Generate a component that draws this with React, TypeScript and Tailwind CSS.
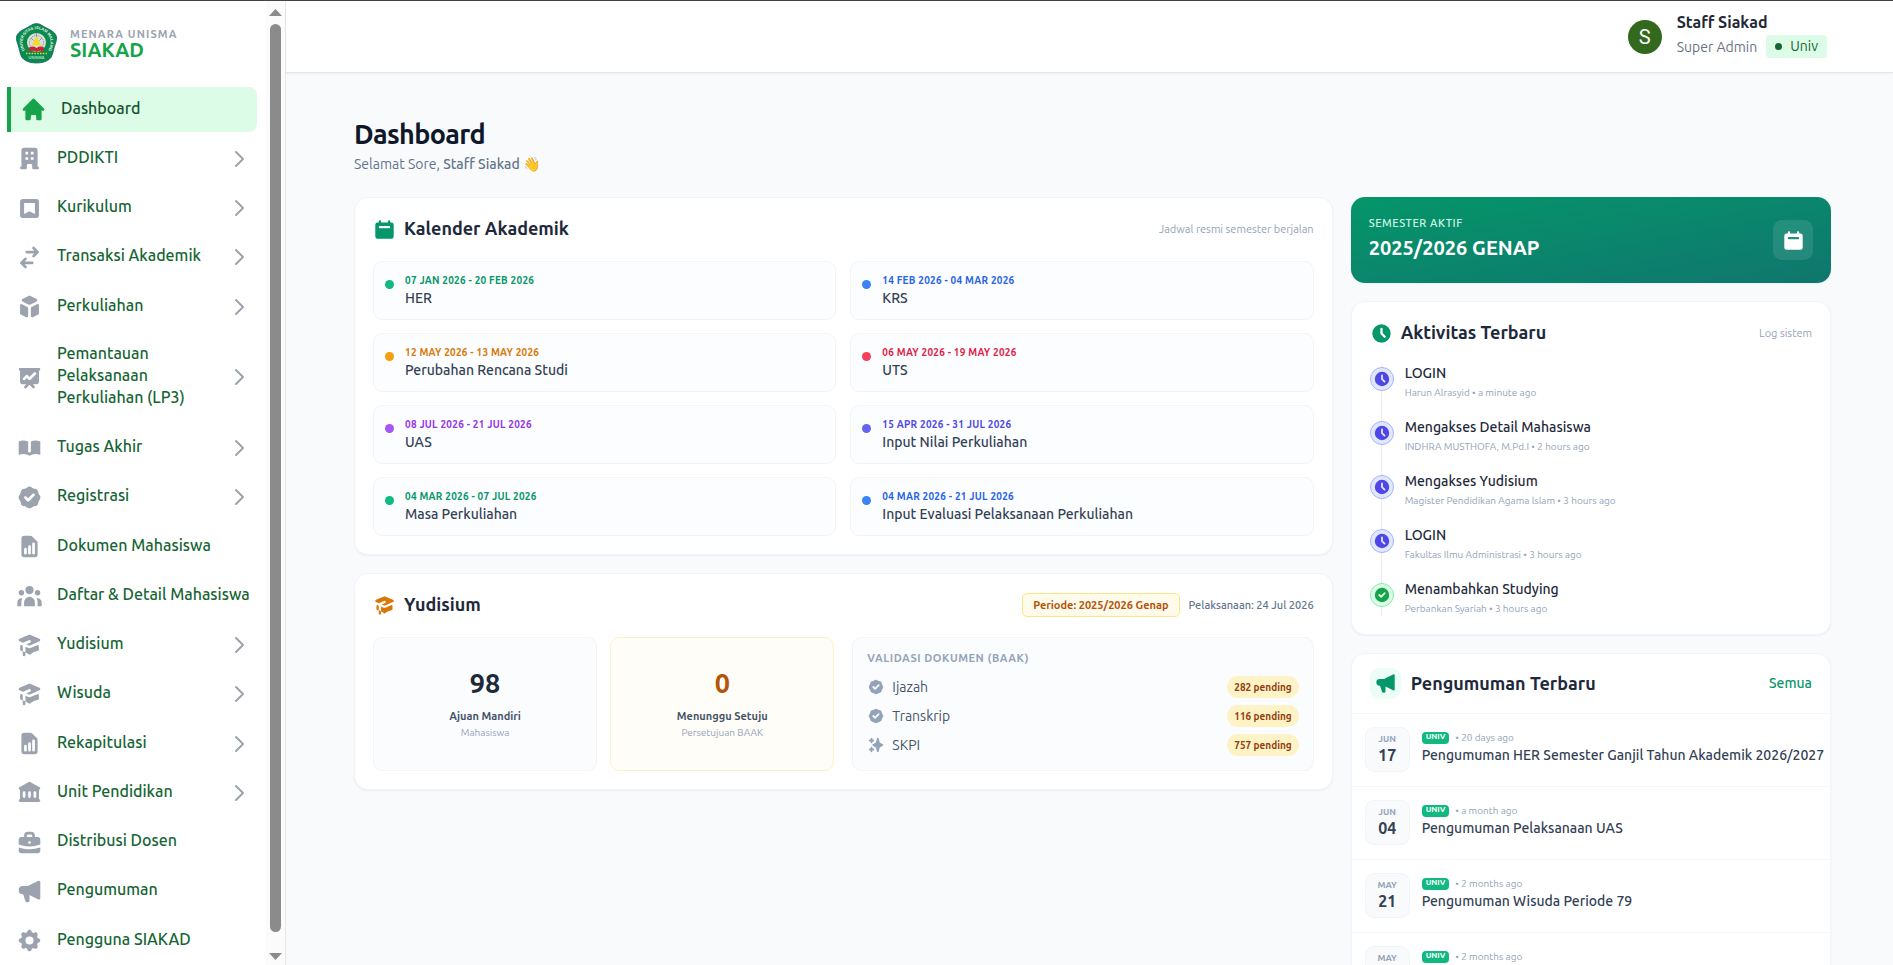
import type { ReactNode } from "react";
import type { IconType } from "react-icons";
import {
  HiAcademicCap,
  HiBadgeCheck,
  HiBookOpen,
  HiBookmarkAlt,
  HiBriefcase,
  HiCalendar,
  HiCheckCircle,
  HiClock,
  HiCog,
  HiCube,
  HiDocumentReport,
  HiHome,
  HiLibrary,
  HiOfficeBuilding,
  HiOutlineChevronRight,
  HiPresentationChartLine,
  HiSparkles,
  HiSpeakerphone,
  HiSwitchHorizontal,
  HiUserGroup,
} from "react-icons/hi";

type NavItem = { label: string; icon: IconType; expandable?: boolean; active?: boolean };

const navItems: NavItem[] = [
  { label: "Dashboard", icon: HiHome, active: true },
  { label: "PDDIKTI", icon: HiOfficeBuilding, expandable: true },
  { label: "Kurikulum", icon: HiBookmarkAlt, expandable: true },
  { label: "Transaksi Akademik", icon: HiSwitchHorizontal, expandable: true },
  { label: "Perkuliahan", icon: HiCube, expandable: true },
  { label: "Pemantauan Pelaksanaan Perkuliahan (LP3)", icon: HiPresentationChartLine, expandable: true },
  { label: "Tugas Akhir", icon: HiBookOpen, expandable: true },
  { label: "Registrasi", icon: HiBadgeCheck, expandable: true },
  { label: "Dokumen Mahasiswa", icon: HiDocumentReport },
  { label: "Daftar & Detail Mahasiswa", icon: HiUserGroup },
  { label: "Yudisium", icon: HiAcademicCap, expandable: true },
  { label: "Wisuda", icon: HiAcademicCap, expandable: true },
  { label: "Rekapitulasi", icon: HiDocumentReport, expandable: true },
  { label: "Unit Pendidikan", icon: HiLibrary, expandable: true },
  { label: "Distribusi Dosen", icon: HiBriefcase },
  { label: "Pengumuman", icon: HiSpeakerphone },
  { label: "Pengguna SIAKAD", icon: HiCog },
];

const events = [
  { date: "07 JAN 2026 - 20 FEB 2026", title: "HER", dot: "bg-[#10b981]", text: "text-[#059669]" },
  { date: "14 FEB 2026 - 04 MAR 2026", title: "KRS", dot: "bg-[#3b82f6]", text: "text-[#2563eb]" },
  { date: "12 MAY 2026 - 13 MAY 2026", title: "Perubahan Rencana Studi", dot: "bg-[#f59e0b]", text: "text-[#d97706]" },
  { date: "06 MAY 2026 - 19 MAY 2026", title: "UTS", dot: "bg-[#f43f5e]", text: "text-[#e11d48]" },
  { date: "08 JUL 2026 - 21 JUL 2026", title: "UAS", dot: "bg-[#a855f7]", text: "text-[#9333ea]" },
  { date: "15 APR 2026 - 31 JUL 2026", title: "Input Nilai Perkuliahan", dot: "bg-[#6366f1]", text: "text-[#4f46e5]" },
  { date: "04 MAR 2026 - 07 JUL 2026", title: "Masa Perkuliahan", dot: "bg-[#10b981]", text: "text-[#059669]" },
  { date: "04 MAR 2026 - 21 JUL 2026", title: "Input Evaluasi Pelaksanaan Perkuliahan", dot: "bg-[#3b82f6]", text: "text-[#2563eb]" },
];

const documents = [
  { label: "Ijazah", pending: 282, icon: HiBadgeCheck },
  { label: "Transkrip", pending: 116, icon: HiBadgeCheck },
  { label: "SKPI", pending: 757, icon: HiSparkles },
];

const activities = [
  { title: "LOGIN", detail: "Harun Alrasyid • a minute ago" },
  { title: "Mengakses Detail Mahasiswa", detail: "INDHRA MUSTHOFA, M.Pd.I • 2 hours ago" },
  { title: "Mengakses Yudisium", detail: "Magister Pendidikan Agama lslam • 3 hours ago" },
  { title: "LOGIN", detail: "Fakultas Ilmu Administrasi • 3 hours ago" },
  { title: "Menambahkan Studying", detail: "Perbankan Syariah • 3 hours ago", created: true },
];

const announcements = [
  { month: "JUN", day: "17", age: "20 days ago", title: "Pengumuman HER Semester Ganjil Tahun Akademik 2026/2027" },
  { month: "JUN", day: "04", age: "a month ago", title: "Pengumuman Pelaksanaan UAS" },
  { month: "MAY", day: "21", age: "2 months ago", title: "Pengumuman Wisuda Periode 79" },
  { month: "MAY", day: "", age: "2 months ago", title: "" },
];

function Logo() {
  return (
    <svg viewBox="0 0 82 82" className="size-[41px] shrink-0" role="img" aria-label="Universitas Islam Malang">
      <path
        d="M41 1C49 1 56 8 63 11C71 15 80 20 81 28C82 36 78 42 76 50C74 58 73 68 66 73C60 78 50 80 41 80C32 80 22 78 16 73C9 68 8 58 6 50C4 42 0 36 1 28C2 20 11 15 19 11C26 8 33 1 41 1Z"
        fill="#0b8a4d"
        stroke="#0e5f6b"
        strokeWidth="1.5"
      />
      <circle cx="41" cy="39" r="19" fill="#d9dfdc" />
      <circle cx="41" cy="39" r="14" fill="none" stroke="#7d8f88" strokeWidth="2" strokeDasharray="2 2" />
      <path d="M41 26L51 45H31Z" fill="#f2dc2f" />
      <path d="M41 20V28M30 30L35 35M52 30L47 35" stroke="#8b9691" strokeWidth="2" />
      <path d="M26 49Q34 45 41 50Q48 45 56 49V57Q48 54 41 58Q34 54 26 57Z" fill="#c9282e" />
      <path d="M20 61H62" stroke="#e9d33a" strokeWidth="2.6" strokeDasharray="3 2.6" />
      <path id="logo-arc" d="M19 56A28 27 0 1 1 63 56" fill="none" />
      <text fontSize="8" fontWeight="700" fill="#e6f4ec" fontFamily="Liberation Sans, sans-serif">
        <textPath href="#logo-arc" startOffset="50%" textAnchor="middle">
          UNIVERSITAS ISLAM MALANG
        </textPath>
      </text>
      <text x="41" y="72" textAnchor="middle" fontSize="8" fontWeight="700" fill="#a9dcc0" fontFamily="Liberation Sans, sans-serif">
        UNISMA
      </text>
    </svg>
  );
}

function SidebarLink({ item }: { item: NavItem }) {
  const Icon = item.icon;
  return (
    <a
      href="#"
      aria-current={item.active ? "page" : undefined}
      className={
        item.active
          ? "flex items-center gap-[14px] rounded-r-lg border-l-4 border-[#16a34a] bg-[#dcfce7] py-[9px] pr-1.5 pl-[9px] text-[#14532d]"
          : "flex items-center gap-[14px] py-[9px] pr-1.5 pl-[9px] text-[#166534]"
      }
    >
      <Icon className={item.active ? "size-[27px] shrink-0 text-[#16a34a]" : "size-[27px] shrink-0 text-[#9ca3af]"} />
      <span
        className={
          item.expandable
            ? "flex-1 pb-[4px] text-[16px] leading-[22px] font-medium"
            : "flex-1 pb-[4px] text-[16px] leading-[22px] font-medium whitespace-nowrap"
        }
      >
        {item.label}
      </span>
      {item.expandable && <HiOutlineChevronRight className="size-6 shrink-0 text-[#9ca3af]" />}
    </a>
  );
}

function Sidebar() {
  return (
    <aside className="flex w-[286px] shrink-0 border-r border-[#e5e7eb] bg-white">
      <div className="flex flex-1 flex-col pl-[7px]">
        <div className="flex h-[86px] items-center gap-[13px] pb-[1px] pl-[9px]">
          <Logo />
          <div className="pb-[1px]">
            <div className="text-[11px] leading-[14px] font-semibold tracking-widest text-[#9ca3af]">MENARA UNISMA</div>
            <div className="text-[20px] leading-[18px] font-bold text-[#16a34a]">SIAKAD</div>
          </div>
        </div>
        <nav className="mr-[9px] mb-[2px] flex flex-1 flex-col justify-between">
          {navItems.map((item) => (
            <SidebarLink key={item.label} item={item} />
          ))}
        </nav>
      </div>
      <div className="flex w-[19px] flex-col items-center bg-[#fbfbfb] pt-2 pb-[5px]" aria-hidden="true">
        <svg viewBox="0 0 13 7" className="h-[7px] w-[13px]" fill="#8b8b8b">
          <path d="M6.500 0L13 7H0Z" />
        </svg>
        <div className="mt-2 mb-[21px] w-[11px] flex-1 rounded-full bg-[#8b8b8b]" />
        <svg viewBox="0 0 13 7" className="h-[7px] w-[13px]" fill="#8b8b8b">
          <path d="M0 0H13L6.500 7Z" />
        </svg>
      </div>
    </aside>
  );
}

function TopBar() {
  return (
    <header className="flex h-[72px] shrink-0 items-center justify-end border-b border-[#e5e7eb] bg-white pr-[66px] shadow-xs">
      <div className="flex items-center gap-[15px]">
        <div className="flex size-[34px] items-center justify-center rounded-full bg-[#33691e] font-[Roboto,sans-serif] text-[20px] text-white">S</div>
        <div className="flex flex-col gap-[2px] pb-[4px]">
          <div className="text-[16px] leading-[22px] font-semibold text-[#1f2937]">Staff Siakad</div>
          <div className="flex items-center gap-[9px]">
            <span className="text-[14px] leading-[20px] text-[#6b7280]">Super Admin</span>
            <span className="flex h-[23px] items-center gap-2 rounded bg-[#dcfce7] px-[9px] text-[14px] text-[#166534]">
              <span className="size-[7px] rounded-full bg-[#166534]" />
              Univ
            </span>
          </div>
        </div>
      </div>
    </header>
  );
}

function Card({ children, className }: { children: ReactNode; className: string }) {
  return <section className={"rounded-[14px] border border-[#f1f5f9] bg-white shadow-xs " + className}>{children}</section>;
}

function CalendarCard() {
  return (
    <Card className="px-[18px] pt-[14px] pb-[18px]">
      <div className="flex h-[34px] items-center justify-between">
        <h2 className="flex items-center gap-[8px] text-[18px] font-semibold text-[#1e293b]">
          <HiCalendar className="size-[23px] text-[#059669]" />
          <span className="pb-[2px]">Kalender Akademik</span>
        </h2>
        <span className="text-[11px] text-[#94a3b8]">Jadwal resmi semester berjalan</span>
      </div>
      <div className="mt-[15px] grid grid-cols-2 gap-x-[14px] gap-y-[13px]">
        {events.map((event) => (
          <div key={event.title} className="flex h-[59px] gap-[11px] rounded-[9px] border border-[#f1f5f9] bg-[#fcfdfe] pt-[11px] pl-[11px]">
            <span className={"mt-[7px] size-[9px] shrink-0 rounded-full " + event.dot} />
            <div>
              <div className={"text-[10px] leading-[16px] font-bold tracking-wide " + event.text}>{event.date}</div>
              <div className="text-[14px] leading-[18px] font-medium text-[#334155]">{event.title}</div>
            </div>
          </div>
        ))}
      </div>
    </Card>
  );
}

function GraduationCard() {
  return (
    <Card className="px-[18px] pt-[14px] pb-[18px]">
      <div className="flex h-[34px] items-center justify-between">
        <h2 className="flex items-center gap-[8px] text-[18px] font-semibold text-[#1e293b]">
          <HiAcademicCap className="size-[23px] text-[#d97706]" />
          <span className="pb-[2px]">Yudisium</span>
        </h2>
        <div className="flex items-center gap-[9px] text-[11px]">
          <span className="flex h-[24px] items-center rounded-[5px] border border-[#fde68a] bg-[#fffbeb] px-[10px] font-bold text-[#b45309]">
            Periode: 2025/2026 Genap
          </span>
          <span className="font-medium text-[#64748b]">Pelaksanaan: 24 Jul 2026</span>
        </div>
      </div>
      <div className="mt-[15px] grid grid-cols-2 gap-[18px]">
        <div className="grid grid-cols-2 gap-[13px]">
          <div className="flex h-[134px] flex-col items-center justify-center rounded-[9px] border border-[#f1f5f9] bg-[#fafcfe] pb-[2px]">
            <div className="text-[27px] leading-[36px] font-bold text-[#1e293b]">98</div>
            <div className="mt-[6px] text-[11px] leading-[18px] font-semibold text-[#475569]">Ajuan Mandiri</div>
            <div className="text-[10px] leading-[16px] text-[#94a3b8]">Mahasiswa</div>
          </div>
          <div className="flex h-[134px] flex-col items-center justify-center rounded-[9px] border border-[#fef3c7] bg-[#fffdf7] pb-[2px]">
            <div className="text-[27px] leading-[36px] font-bold text-[#b45309]">0</div>
            <div className="mt-[6px] text-[11px] leading-[18px] font-semibold text-[#475569]">Menunggu Setuju</div>
            <div className="text-[10px] leading-[16px] text-[#94a3b8]">Persetujuan BAAK</div>
          </div>
        </div>
        <div className="rounded-[9px] border border-[#f1f5f9] bg-[#fafcfe] px-[14px] pt-[11px]">
          <h3 className="text-[11px] leading-[18px] font-bold tracking-wider text-[#94a3b8]">VALIDASI DOKUMEN (BAAK)</h3>
          <ul className="mt-[9px] flex flex-col gap-[7px]">
            {documents.map((doc) => (
              <li key={doc.label} className="flex h-[22px] items-center justify-between">
                <span className="flex items-center gap-[7px] text-[14px] text-[#475569]">
                  <doc.icon className="size-[18px] text-[#94a3b8]" />
                  {doc.label}
                </span>
                <span className="flex h-[22px] items-center rounded-full bg-[#fef3c7] px-[7px] text-[10px] font-bold text-[#92400e]">{doc.pending} pending</span>
              </li>
            ))}
          </ul>
        </div>
      </div>
    </Card>
  );
}

function SemesterCard() {
  return (
    <section className="flex h-[86px] items-center justify-between rounded-[14px] bg-linear-to-br from-[#059669] to-[#0f766e] px-[18px] shadow-xs">
      <div className="pb-[4px]">
        <div className="text-[11px] leading-[18px] font-medium tracking-wider text-[#d1fae5]">SEMESTER AKTIF</div>
        <div className="mt-[2px] text-[20px] leading-[28px] font-bold text-white">2025/2026 GENAP</div>
      </div>
      <div className="flex size-10 items-center justify-center rounded-[9px] bg-white/10">
        <HiCalendar className="size-[23px] text-white" />
      </div>
    </section>
  );
}

function ActivityCard() {
  return (
    <Card className="px-[18px] pt-[14px] pb-[18px]">
      <div className="flex h-[34px] items-center justify-between">
        <h2 className="flex items-center gap-[8px] text-[18px] font-semibold text-[#1e293b]">
          <HiClock className="size-[23px] text-[#059669]" />
          <span className="pb-[2px]">Aktivitas Terbaru</span>
        </h2>
        <span className="text-[11px] text-[#94a3b8]">Log sistem</span>
      </div>
      <ul className="relative mt-[14px] flex flex-col gap-[18px]">
        <li className="absolute top-0 bottom-0 left-[11px] w-px bg-[#e9edf2]" aria-hidden="true" />
        {activities.map((activity, index) => (
          <li key={index} className="relative flex h-[36px] gap-[11px]">
            <span
              className={
                activity.created
                  ? "mt-[3px] flex size-6 items-center justify-center rounded-full border border-[#86efac] bg-[#dcfce7] text-[#16a34a]"
                  : "mt-[3px] flex size-6 items-center justify-center rounded-full border border-[#a5b4fc] bg-[#e0e7ff] text-[#4f46e5]"
              }
            >
              {activity.created ? <HiCheckCircle className="size-[18px]" /> : <HiClock className="size-[18px]" />}
            </span>
            <div>
              <div className="text-[14px] leading-[18px] font-medium text-[#1e293b]">{activity.title}</div>
              <div className="mt-[2px] text-[10px] leading-[18px] text-[#94a3b8]">{activity.detail}</div>
            </div>
          </li>
        ))}
      </ul>
    </Card>
  );
}

function AnnouncementCard() {
  return (
    <Card className="overflow-hidden">
      <div className="flex h-[59px] items-center justify-between px-[18px]">
        <h2 className="flex items-center gap-[10px] text-[18px] font-semibold text-[#1e293b]">
          <span className="flex size-[31px] items-center justify-center rounded-[9px] bg-[#ecfdf5]">
            <HiSpeakerphone className="size-[23px] text-[#059669]" />
          </span>
          Pengumuman Terbaru
        </h2>
        <a href="#" className="text-[14px] font-medium text-[#059669]">
          Semua
        </a>
      </div>
      <ul>
        {announcements.map((item, index) => (
          <li key={index} className="flex h-[73px] gap-[12px] border-t border-[#f5f8fb] px-[13px] pt-[13px]">
            <div className="flex h-[45px] w-[45px] shrink-0 flex-col items-center rounded-[9px] border border-[#f1f5f9] bg-[#f8fafc] pt-[4px]">
              <span className="text-[9px] leading-[14px] font-semibold text-[#94a3b8]">{item.month}</span>
              <span className="text-[16px] leading-[18px] font-bold text-[#334155]">{item.day}</span>
            </div>
            <div className="pt-[3px]">
              <div className="flex items-center gap-[6px]">
                <span className="flex h-[12px] items-start rounded bg-[#10b981] px-1 text-[8px] leading-[9px] font-bold text-white">UNIV</span>
                <span className="text-[10px] leading-[16px] text-[#94a3b8]">• {item.age}</span>
              </div>
              <div className="text-[14px] leading-[18px] font-medium whitespace-nowrap text-[#334155]">{item.title}</div>
            </div>
          </li>
        ))}
      </ul>
    </Card>
  );
}

export default function App() {
  return (
    <div className="flex h-screen overflow-hidden border-t border-[#444444] bg-[#f8fafc] font-['Ubuntu','Open_Sans',sans-serif]">
      <Sidebar />
      <div className="flex min-w-0 flex-1 flex-col">
        <TopBar />
        <main className="flex-1 overflow-hidden pt-[43px] pr-[62px] pl-[68px]">
          <h1 className="text-[27px] leading-[36px] font-bold tracking-tight text-[#0f172a]">Dashboard</h1>
          <p className="mt-[2px] text-[14px] leading-[20px] text-[#64748b]">
            Selamat Sore, <span className="font-medium">Staff Siakad</span> 👋
          </p>
          <div className="mt-[23px] grid grid-cols-3 items-start gap-[18px]">
            <div className="col-span-2 flex flex-col gap-[18px]">
              <CalendarCard />
              <GraduationCard />
            </div>
            <div className="flex flex-col gap-[18px]">
              <SemesterCard />
              <ActivityCard />
              <AnnouncementCard />
            </div>
          </div>
        </main>
      </div>
    </div>
  );
}
